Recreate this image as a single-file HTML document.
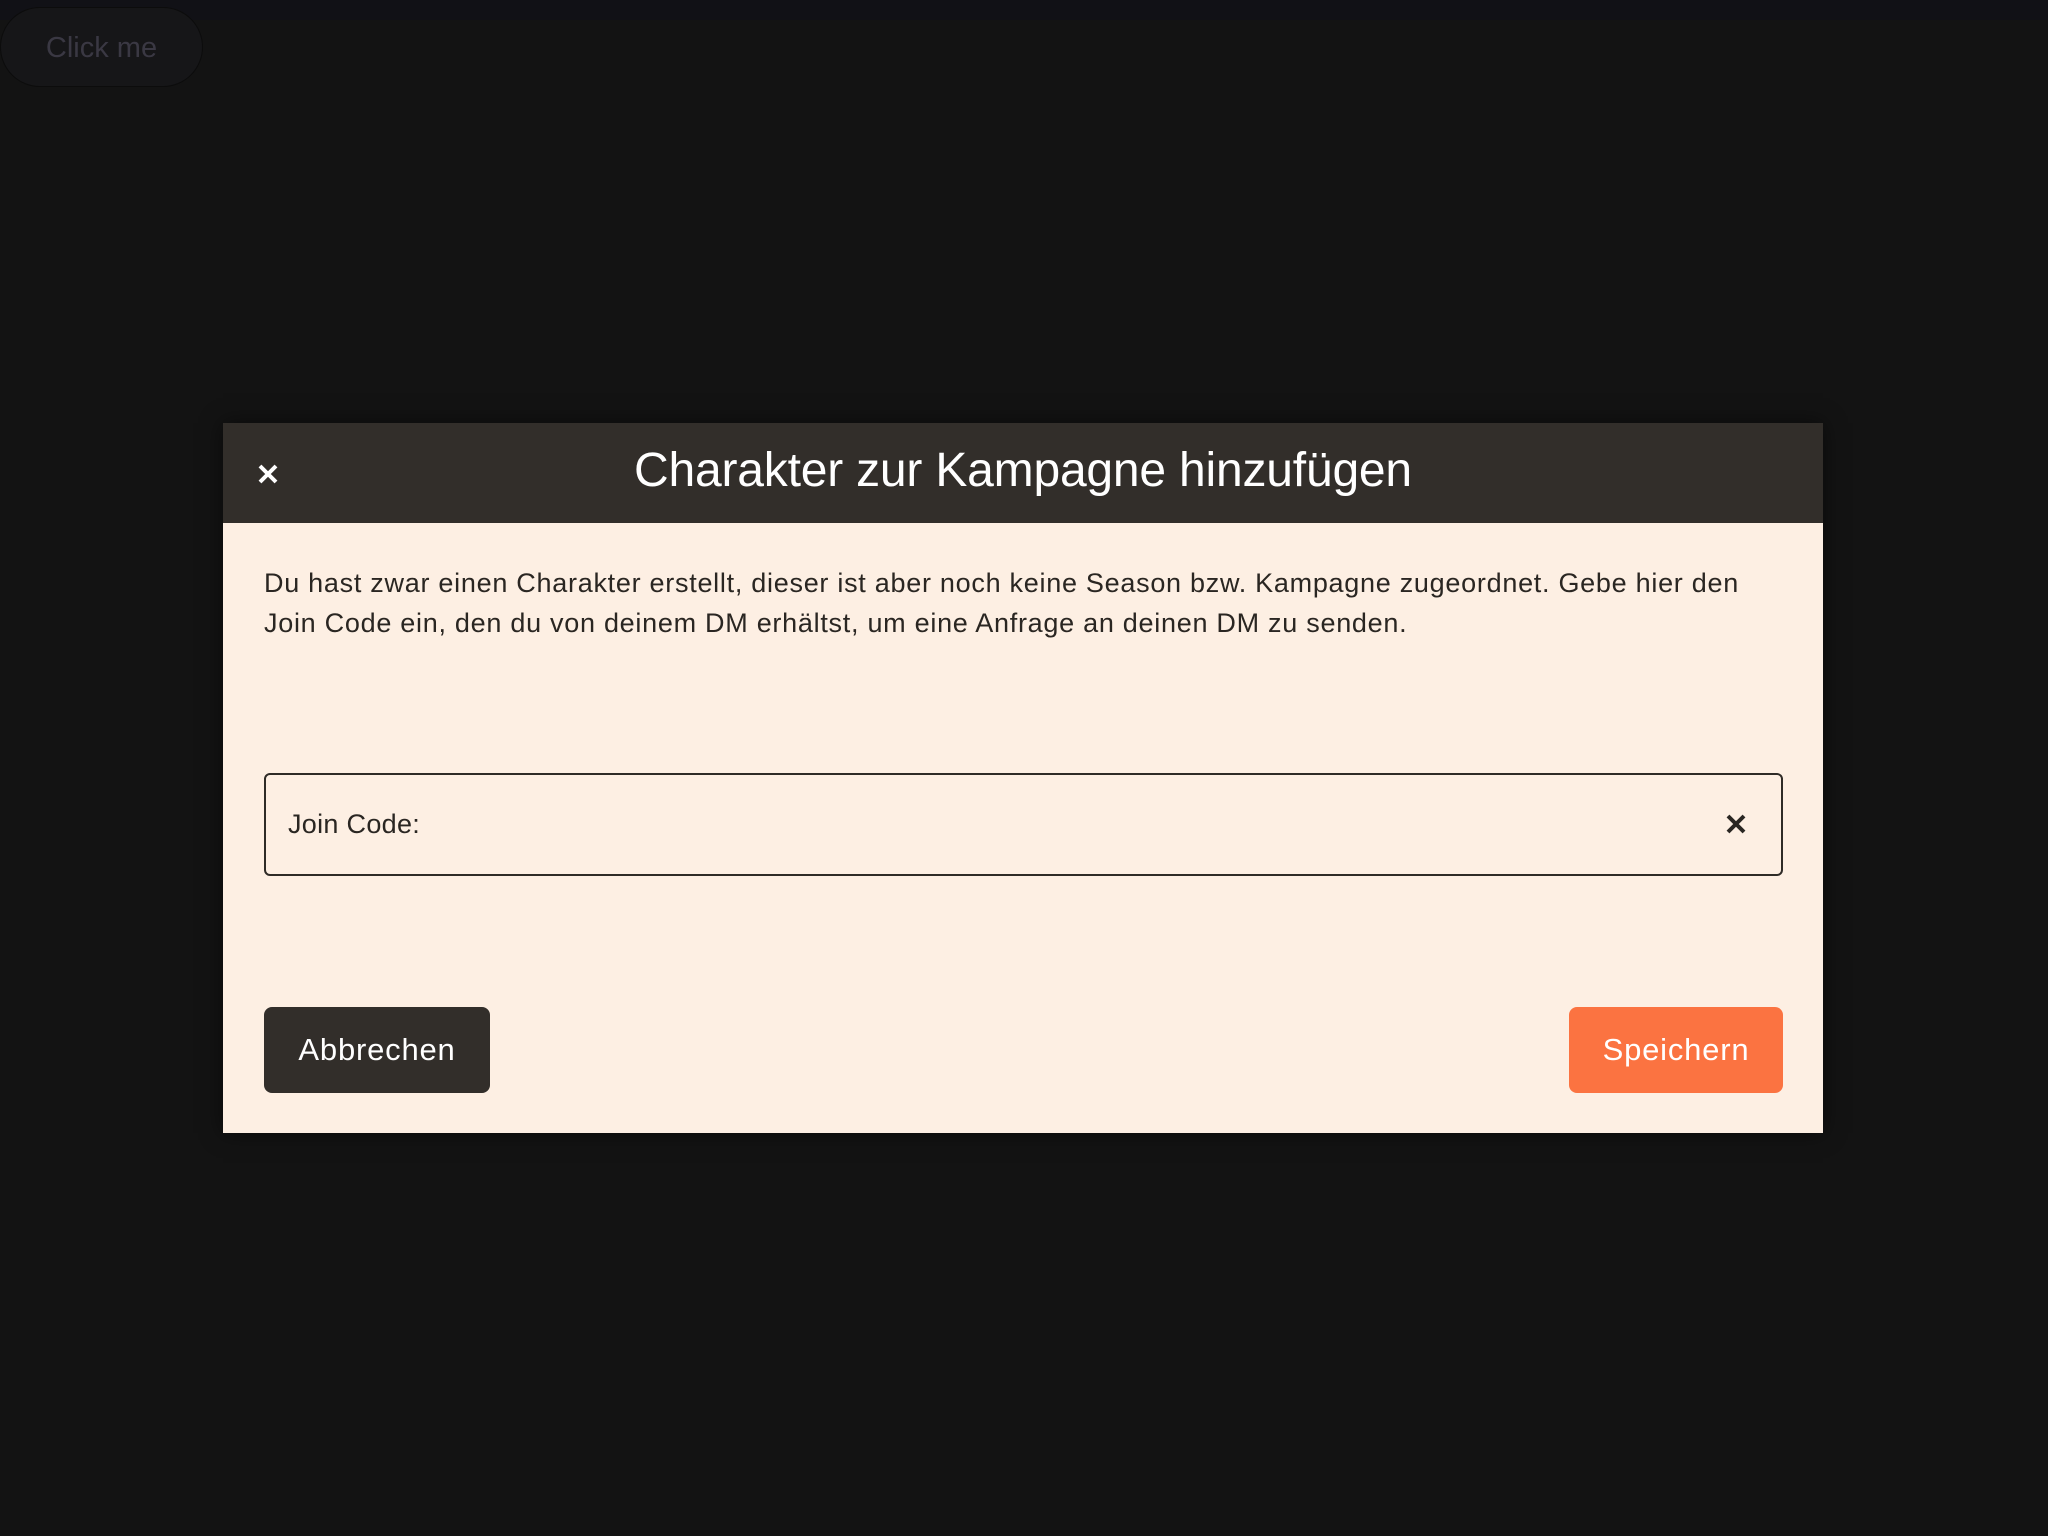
<!DOCTYPE html>
<html><head><meta charset="utf-8"><style>
html,body{margin:0;padding:0;width:2048px;height:1536px;background:#131313;overflow:hidden;font-family:"Liberation Sans",sans-serif}
.top{position:absolute;left:0;top:0;width:2048px;height:20px;background:#111116}
.click{position:absolute;left:0;top:7px;width:203px;height:80px;border-radius:40px;background:#161618;border:1px solid #0c0c0c;color:#3a3843;font-size:29px;line-height:80px;text-align:center;box-sizing:border-box}
.dlg{position:absolute;left:223px;top:423px;width:1600px;height:710px;background:#fdefe3;box-shadow:0 0 20px rgba(0,0,0,.5)}
.hd{height:100px;background:#322e2a;position:relative;color:#fff}
.hd .t{position:absolute;left:0;right:0;top:0;line-height:96px;text-align:center;font-size:48px;letter-spacing:-0.2px}
.hd svg{position:absolute;left:34px;top:40px}
.txt{position:absolute;left:41px;top:140px;font-size:27px;line-height:40px;color:#2a2622;white-space:nowrap;letter-spacing:0.72px}
.inp{position:absolute;left:41px;top:350px;width:1519px;height:103px;border:2px solid #2f2b27;border-radius:6px;box-sizing:border-box}
.inp span{position:absolute;left:22px;top:0;line-height:99px;font-size:27px;color:#2a2622;letter-spacing:0.3px}
.inp svg{position:absolute;right:34px;top:38px}
.btn{position:absolute;top:584px;height:86px;border-radius:8px;color:#fff;font-size:31px;line-height:86px;text-align:center;letter-spacing:0.8px}
</style></head><body>
<div class="top"></div>
<div class="click">Click me</div>
<div class="dlg">
 <div class="hd"><svg width="22" height="22" viewBox="0 0 22 22"><path d="M3 3L19 19M19 3L3 19" stroke="#fff" stroke-width="4"/></svg><div class="t">Charakter zur Kampagne hinzufügen</div></div>
 <div class="txt">Du hast zwar einen Charakter erstellt, dieser ist aber noch keine Season bzw. Kampagne zugeordnet. Gebe hier den<br>Join Code ein, den du von deinem DM erhältst, um eine Anfrage an deinen DM zu senden.</div>
 <div class="inp"><span>Join Code:</span><svg width="22" height="22" viewBox="0 0 22 22"><path d="M3 3L19 19M19 3L3 19" stroke="#2a2622" stroke-width="4"/></svg></div>
 <div class="btn" style="left:41px;width:226px;background:#322e2a">Abbrechen</div>
 <div class="btn" style="left:1346px;width:214px;background:#fb7341">Speichern</div>
</div>
</body></html>
